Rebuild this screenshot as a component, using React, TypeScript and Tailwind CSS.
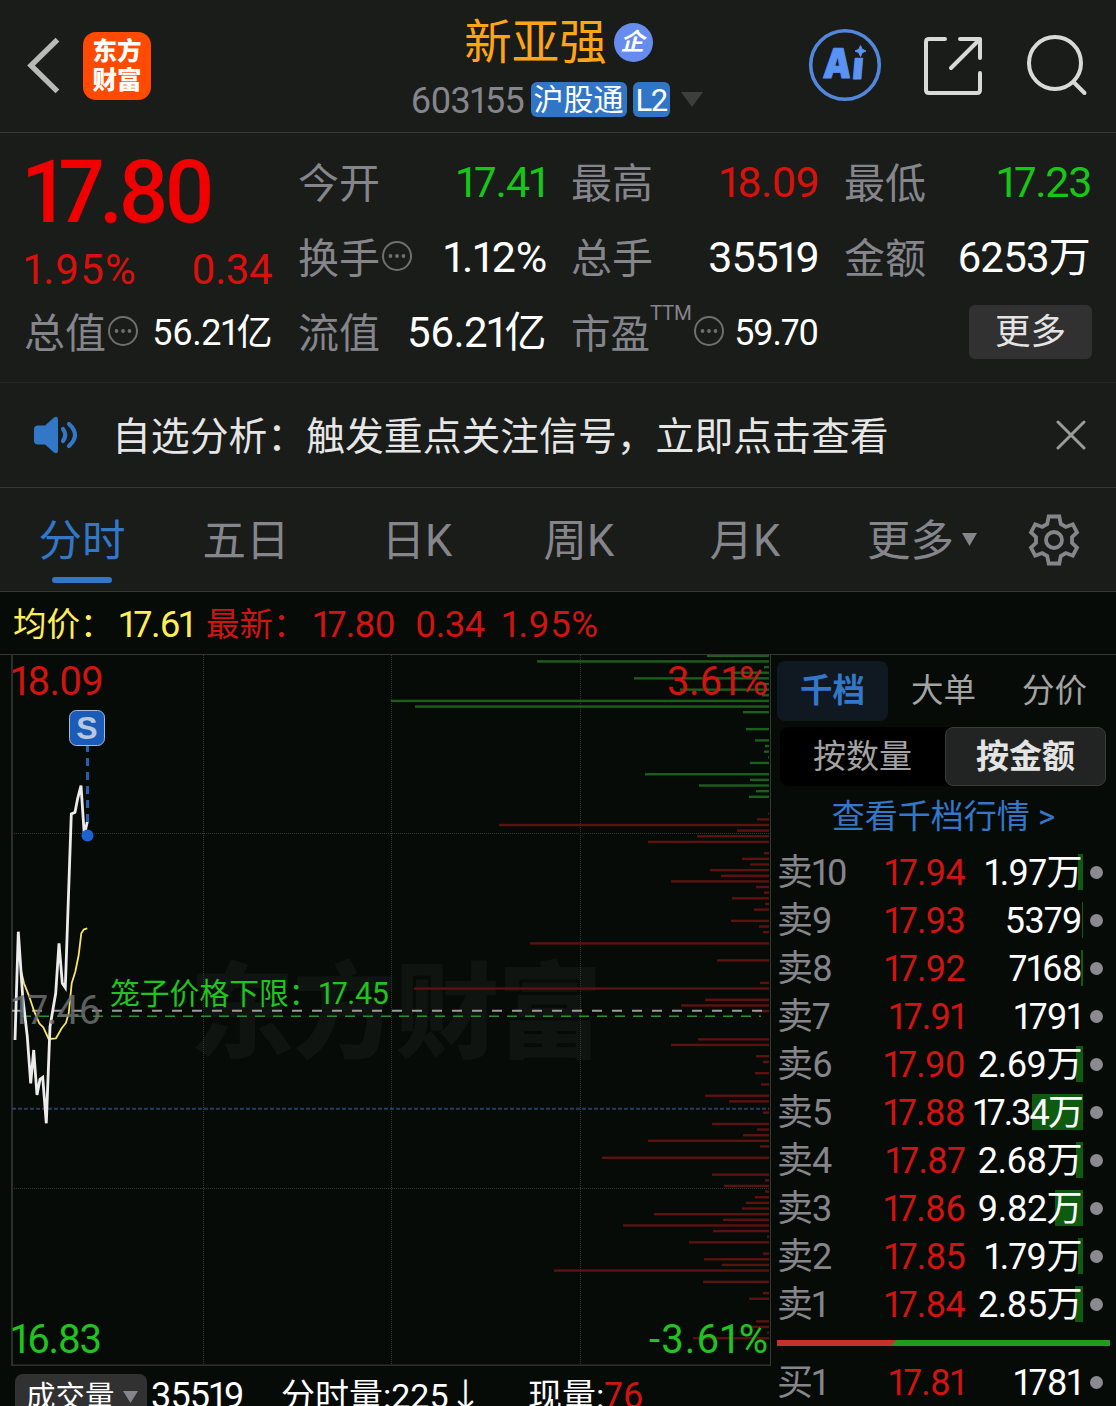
import type { ReactNode } from "react";
import clsx from "clsx";

// [price slot, bar length]; slots run from the top of the chart downwards
const sellDepth = [
  [0, 62], [1, 232], [2, 5], [3, 36], [4, 135], [5, 12], [6, 89], [7, 7], [8, 378], [9, 354],
  [10, 26], [13, 23], [15, 14], [16, 4], [17, 5], [18, 1], [19, 19], [21, 124], [22, 19],
  [23, 70], [24, 13], [25, 20],
];

const buyDepth = [
  [28, 1], [29, 12], [30, 270], [31, 32], [32, 72], [33, 121], [35, 5], [36, 27], [37, 19],
  [38, 59], [39, 48], [40, 98], [41, 13], [42, 5], [43, 37], [44, 4], [45, 15], [47, 38],
  [48, 10], [49, 6], [51, 239], [54, 52], [58, 9], [59, 355], [61, 64], [62, 88], [63, 14],
  [68, 71], [69, 98], [71, 13], [72, 6], [74, 14], [76, 8], [78, 64], [79, 40], [81, 6],
  [83, 57], [84, 12], [85, 26], [86, 121], [87, 9], [89, 167], [92, 57], [93, 4], [94, 45],
  [95, 4], [96, 14], [97, 23], [98, 27], [99, 115], [100, 46], [101, 146], [102, 56],
  [103, 2], [104, 80], [106, 6], [107, 65], [108, 47], [109, 215], [111, 66], [113, 6],
  [114, 20], [118, 13], [119, 22], [120, 2], [121, 76],
];

const priceLine =
  "15,385 18.3,276.7 22.7,341.7 27.3,381.7 30.7,428.3 33.7,395 37,440 40,424.3 42.7,422.3 46.3,468.3 50,371.7 55.7,338.3 59,288.3 62.3,328.3 65.3,332.7 71.3,159 75,157.3 77.7,143.3 81,130.7 84.3,180 87.3,166.7";
const averageLine =
  "21.3,316.7 24,328.3 29.3,341.7 34.3,356.7 39.3,368.3 43.3,372.3 48.7,384 56,383.3 61.7,373.3 66,367.7 68.7,358.3 71.7,328.3 75.3,316.7 78.7,300 81.3,278.3 84,274.3 87.3,273.3";

const asks = [
  { label: "卖10", price: "17.94", amount: "1.97万", bar: 5 },
  { label: "卖9", price: "17.93", amount: "5379", bar: 1 },
  { label: "卖8", price: "17.92", amount: "7168", bar: 2 },
  { label: "卖7", price: "17.91", amount: "1791", bar: 0 },
  { label: "卖6", price: "17.90", amount: "2.69万", bar: 7 },
  { label: "卖5", price: "17.88", amount: "17.34万", bar: 51 },
  { label: "卖4", price: "17.87", amount: "2.68万", bar: 7 },
  { label: "卖3", price: "17.86", amount: "9.82万", bar: 28 },
  { label: "卖2", price: "17.85", amount: "1.79万", bar: 5 },
  { label: "卖1", price: "17.84", amount: "2.85万", bar: 8 },
];

function InfoDots() {
  return (
    <svg viewBox="0 0 32 32" className="mb-0.5 ml-px size-8 shrink-0 text-[#6f6f6f]">
      <circle cx="16" cy="16" r="14" fill="none" stroke="currentColor" strokeWidth="2" />
      <circle cx="9.5" cy="16" r="1.9" fill="currentColor" />
      <circle cx="16" cy="16" r="1.9" fill="currentColor" />
      <circle cx="22.5" cy="16" r="1.9" fill="currentColor" />
    </svg>
  );
}

function Stat({
  label,
  info,
  value,
  className,
}: {
  label: ReactNode;
  info?: boolean;
  value: string;
  className: string;
}) {
  return (
    <div className="flex h-[75px] items-center justify-between whitespace-nowrap">
      <div className="flex items-center text-[41px] text-[#85858b]">
        <span className="pt-[5px]">{label}</span>
        {info && <InfoDots />}
      </div>
      <span className={clsx("pt-0.5", className)}>{value}</span>
    </div>
  );
}

function Header() {
  return (
    <header className="flex h-[133px] border-b border-[#343734]">
      <div className="flex flex-1 pt-8 pl-[26px]">
        <svg viewBox="0 0 34 58" className="mt-1 h-[58px] w-[34px]">
          <path d="M29.500 5.500 5 29.500l24.500 24" fill="none" stroke="#b9b9b9" strokeWidth="5.400" strokeLinecap="square" />
        </svg>
        <div className="ml-[23px] flex size-[68px] flex-col items-center justify-center rounded-[13px] bg-[#ff4a00] pb-px text-[24.5px] leading-[29px] font-black text-white">
          <span>东方</span>
          <span>财富</span>
        </div>
      </div>
      <div className="flex flex-col items-center">
        <div className="mt-[14px] flex h-14 items-center gap-[7px] pl-[3px]">
          <h1 className="pt-[3px] text-[47.5px] text-[#fda516]">新亚强</h1>
          <span className="flex size-[39px] items-center justify-center rounded-full bg-[#668ced] pr-0.5 text-[24px] font-bold text-white italic">
            企
          </span>
        </div>
        <div className="mt-2 flex h-[42px] items-center pr-px">
          <span className="w-[120px] pt-[3px] text-[36px] tracking-[-0.7px] text-[#85858b]">603155</span>
          <span className="flex h-[35px] w-24 items-center justify-center rounded-md bg-[#3176c6] pt-0.5 text-[30px] text-white">
            沪股通
          </span>
          <span className="ml-1.5 flex h-[35px] w-[37px] items-center justify-center rounded-md bg-[#3176c6] pt-0.5 text-[31px] tracking-[-1.5px] text-white">
            L2
          </span>
          <svg viewBox="0 0 22 15" className="ml-[11px] h-[15px] w-[22px]">
            <path d="M0 0h22L11 15z" fill="#3e3e3e" />
          </svg>
        </div>
      </div>
      <div className="flex flex-1 justify-end pt-7 pr-[28px]">
        <svg viewBox="0 0 74 74" className="size-[74px]">
          <circle cx="37" cy="37" r="34.3" fill="none" stroke="#5387dd" strokeWidth="3.6" />
          <g fill="#5a92f5" stroke="#5a92f5" strokeLinejoin="round" fontFamily="Inter" fontWeight="900" fontSize="41">
            <text x="16" y="50" strokeWidth="1" textLength="28" lengthAdjust="spacingAndGlyphs" transform="skewX(-4) translate(2 0)">A</text>
            <text x="44" y="51.500" strokeWidth="1" fontSize="38" transform="skewX(-5) translate(4 0)">ı</text>
            <path d="M52.500 17.500l1.700 3.800 3.800 1.700-3.800 1.700-1.700 3.800-1.700-3.800-3.800-1.700 3.800-1.700z" />
          </g>
        </svg>
        <svg viewBox="0 0 60 60" className="mt-2 ml-[41px] size-[60px]" fill="none" stroke="#d9d9d9" strokeWidth="4" strokeLinecap="round" strokeLinejoin="round">
          <path d="M22 3H6Q3 3 3 6v48q0 3 3 3h48q3 0 3-3V37M37 3h20v19M57 3 28 32" />
        </svg>
        <svg viewBox="0 0 62 62" className="mt-1.5 ml-[43px] size-[62px]" fill="none" stroke="#d9d9d9" strokeWidth="4" strokeLinecap="round">
          <circle cx="29" cy="29" r="26" />
          <path d="m47.500 48 11 11" />
        </svg>
      </div>
    </header>
  );
}

function Quote() {
  return (
    <section className="flex h-[250px] border-b border-[#262926] pt-[11px] pl-6">
      <div className="w-[248px]">
        <div className="flex h-24 items-center text-[87px] font-medium tracking-[-5.2px] text-[#f00000]">17.80</div>
        <div className="flex h-[54px] items-center justify-between pt-1.5 text-[42px] text-[#d7110d]">
          <span className="tracking-[1px]">1.95%</span>
          <span className="tracking-[-0.5px]">0.34</span>
        </div>
        <Stat label="总值" info value="56.21亿" className="text-[36px] tracking-[-0.4px] text-white" />
      </div>
      <div className="ml-[26px] w-[249px]">
        <Stat label="今开" value="17.41" className="text-[43px] tracking-[-0.9px] text-[#17c717]" />
        <Stat label="换手" info value="1.12%" className="text-[43px] tracking-[-0.2px] text-white" />
        <Stat label="流值" value="56.21亿" className="pr-px text-[42px] tracking-[-0.6px] text-white" />
      </div>
      <div className="ml-6 w-[248px]">
        <Stat label="最高" value="18.09" className="text-[43px] tracking-[-1px] text-[#d7110d]" />
        <Stat label="总手" value="35519" className="text-[43px] tracking-[-1px] text-white" />
        <Stat
          label={
            <>
              <span className="text-[39.500px]">市盈</span>
              <sup className="-top-[28px] text-[20.500px] leading-none tracking-[-0.3px]">TTM</sup>
            </>
          }
          info
          value="59.70"
          className="pr-px text-[36px] tracking-[-1.2px] text-white"
        />
      </div>
      <div className="ml-[25px] w-[248px]">
        <Stat label="最低" value="17.23" className="pr-px text-[43px] tracking-[-1.3px] text-[#17c717]" />
        <Stat label="金额" value="6253万" className="pr-0.5 text-[42px] tracking-[-0.8px] text-white" />
        <div className="flex h-[75px] items-center justify-end">
          <button className="h-[54px] w-[123px] rounded-md bg-[#313131] pt-[3px] text-[35.500px] leading-none text-[#e4e4e4]">更多</button>
        </div>
      </div>
    </section>
  );
}

function Notice() {
  return (
    <section className="flex h-[105px] items-center border-b border-[#343734] pr-[30px] pl-[33px]">
      <svg viewBox="0 0 46 38" className="h-[38px] w-[46px]">
        <path d="M1 13.500q0-4 4-4h7L21 1.500q4-2 4 2v31q0 4-4 2l-9-8H5q-4 0-4-4z" fill="#3277c8" />
        <path d="M30 13q4.500 6 0 12M36 8q12 11 0 22" fill="none" stroke="#3277c8" strokeWidth="4.200" strokeLinecap="round" />
      </svg>
      <p className="ml-[33px] pt-1 text-[38.850px] whitespace-nowrap text-[#e6e6e6]">自选分析：触发重点关注信号，立即点击查看</p>
      <svg viewBox="0 0 30 30" className="ml-auto size-[30px]">
        <path d="m2 2 26 26M28 2 2 28" stroke="#9b9b9b" strokeWidth="3" strokeLinecap="round" />
      </svg>
    </section>
  );
}

function PeriodTabs() {
  return (
    <nav className="grid h-[104px] grid-cols-[164px_164px_178px_146px_186px_168px_96px] items-center justify-items-center border-b border-[#343734] text-[43.500px] whitespace-nowrap text-[#85858b]">
      <span className="relative pt-1 text-[#3277c8]">
        分时
        <i className="absolute -bottom-[20px] left-[13px] h-1.5 w-[60px] rounded-full bg-[#3277c8]" />
      </span>
      <span className="pt-1">五日</span>
      <span className="pt-1">日K</span>
      <span className="pt-1">周K</span>
      <span className="pt-1">月K</span>
      <span className="flex items-center gap-2">
        <span className="pt-1">更多</span>
        <svg viewBox="0 0 15 13" className="h-[13px] w-[15px]">
          <path d="M0 0h15L7.500 13z" fill="currentColor" />
        </svg>
      </span>
      <svg viewBox="0 0 52 52" className="size-[52px]" fill="none" stroke="currentColor" strokeWidth="3.800">
        <path d="M20.700 2.500h10.600l1.500 7.500 5 3 7-2.700 4.200 8-5 4.700v6l5 4.700-4.200 8-7-2.700-5 3-1.500 7.500H20.700L19.200 42l-5-3-7 2.700-4.200-8L8 29v-6l-5-4.700 4.200-8 7 2.700 5-3z" />
        <circle cx="26" cy="26" r="8" />
      </svg>
    </nav>
  );
}

function PriceBar() {
  return (
    <div className="flex h-[63px] items-center border-b border-[#343734] pt-1 pl-[13px] text-[36.500px] whitespace-nowrap text-[#d01410]">
      <span className="flex w-[193px] items-center text-[#ffee58]">
        <span className="w-[106px] text-[33.500px]">均价：</span>
        <span className="tracking-[-1.300px]">17.61</span>
      </span>
      <span className="w-[107px] text-[33.500px]">最新：</span>
      <span className="w-[102px] tracking-[-1px]">17.80</span>
      <span className="w-[87px] tracking-[-0.5px]">0.34</span>
      <span className="tracking-[0.6px]">1.95%</span>
    </div>
  );
}

function DepthBars({ rows, color }: { rows: number[][]; color: string }) {
  return (
    <g fill={color}>
      {rows.map(([slot, length]) => (
        <rect key={slot} x={769 - length} y={slot * 5.64 - 0.4} width={length} height="2.4" />
      ))}
    </g>
  );
}

function Chart() {
  return (
    <svg viewBox="0 0 771 711" className="block h-[711px] w-[771px]" fontFamily="Roboto, 'Noto Sans CJK SC', sans-serif">
      <text x="190" y="395" fontSize="104" fontWeight="900" fill="#101411" textLength="412">
        东方财富
      </text>
      <g stroke="#343734" strokeWidth="1" strokeDasharray="1 1">
        <path d="M203.500 0v710M391.500 0v710M580.500 0v710M12 178.500h758M12 533.500h758" />
      </g>
      <path d="M12 0v710.500h758" fill="none" stroke="#2c2f2c" strokeWidth="2" />
      <path d="M770.500 0v711" stroke="#343734" />
      <DepthBars rows={sellDepth} color="#1b5f1d" />
      <DepthBars rows={buyDepth} color="#5c1210" />

      <path d="M12 355.700h750" stroke="#9a9a9a" strokeWidth="2" strokeDasharray="10 10" />
      <path d="M21 361.300h740" stroke="#2c8f2c" strokeWidth="1.400" strokeDasharray="10 8" />
      <path d="M12 453.700h757" stroke="#2b3c5e" strokeWidth="2" strokeDasharray="4 2" />

      <polyline points={averageLine} fill="none" stroke="#f7e468" strokeWidth="1.800" strokeLinejoin="round" />
      <polyline points={priceLine} fill="none" stroke="#ececec" strokeWidth="2.800" />

      <path d="M87.500 91v78" stroke="#2461b4" strokeWidth="3" strokeDasharray="8 6" strokeDashoffset="2" />
      <circle cx="87.500" cy="180.500" r="6" fill="#1b63d0" />
      <rect x="69.500" y="55.500" width="35" height="35" rx="7" fill="#1b5cb8" stroke="#a9bbd6" />
      <text x="87" y="84" textAnchor="middle" fontSize="32" fontWeight="700" fontFamily="Liberation Sans" fill="#b9c8de">
        S
      </text>

      <g fontSize="40">
        <text x="11" y="40" textLength="93" fill="#d01410">18.09</text>
        <text x="11" y="369" textLength="90" fill="#6e6e6e" fillOpacity=".85">17.46</text>
        <text x="11" y="698" textLength="91" fill="#1fc41f">16.83</text>
        <text x="667" y="40" textLength="101" fill="#d01410">3.61%</text>
        <text x="649" y="698" textLength="119" fill="#1fc41f">-3.61%</text>
      </g>
      <g fontSize="30.500" fill="#1fc41f">
        <text x="110" y="349" fontSize="29.800">笼子价格下限：</text>
        <text x="319" y="349" textLength="70">17.45</text>
      </g>
    </svg>
  );
}

function VolumeBar() {
  return (
    <div className="flex h-10 text-[34px] leading-[60px] whitespace-nowrap text-white">
      <button className="mt-2 ml-[15px] flex h-12 w-[132px] items-start rounded-lg bg-[#313131] pl-[11px] text-[29.500px] leading-[46px]">
        成交量
        <svg viewBox="0 0 15 12" className="mt-[17px] ml-2 h-3 w-[15px]">
          <path d="M0 0h15L7.500 12z" fill="#85858b" />
        </svg>
      </button>
      <span className="ml-1 w-[130px] text-[36px] tracking-[-0.8px]">35519</span>
      <span className="w-[247px]">分时量:225↓</span>
      <span>
        现量:<span className="text-[36px] text-[#d01410]">76</span>
      </span>
    </div>
  );
}

function OrderRow({ label, price, amount, bar }: (typeof asks)[number]) {
  // six-glyph amounts are set tighter so that they stay clear of the price
  const wide = amount.length > 5;
  return (
    <li className="relative flex h-12 items-center text-[36px] leading-none whitespace-nowrap">
      <i className="absolute right-[33px] h-9 bg-[#0d5a10]" style={{ width: bar }} />
      <span className="relative w-[90px] pt-px tracking-[-1px] text-[#85858b]">{label}</span>
      <span className="relative w-[98px] pt-px text-right tracking-[-0.8px] text-[#d01410]">{price}</span>
      <span className={clsx("relative w-[117px] pt-px text-right text-white", wide ? "tracking-[-1.9px]" : "tracking-[-0.6px]")}>
        {amount}
      </span>
      <i className="ml-2 size-[13px] rounded-full bg-[#8a8a90]" />
    </li>
  );
}

function OrderBook() {
  return (
    <aside className="w-[345px]">
      <div className="mt-1.5 ml-1.5 grid h-[60px] w-[333px] grid-cols-3 text-[32.500px] leading-[60px] text-[#a3a3a3]">
        {["千档", "大单", "分价"].map((name, i) => (
          <span key={name} className={clsx("rounded-lg text-center", i === 0 && "bg-[#101821] font-bold text-[#3277c8]")}>
            {name}
          </span>
        ))}
      </div>
      <div className="mt-1.5 ml-[9px] grid h-[59px] w-[326px] grid-cols-[165px_161px] grid-rows-[59px] rounded-lg bg-black text-center text-[33px] leading-[60px] text-[#a3a3a3]">
        <span>按数量</span>
        <span className="rounded-lg border border-[#393c39] bg-[#212422] leading-[58px] font-bold text-[#e4e4e4]">按金额</span>
      </div>
      <a className="block h-[62px] text-center text-[33px] leading-[62px] text-[#3277c8]">查看千档行情 &gt;</a>
      <ul className="pl-1.5">
        {asks.map((row) => (
          <OrderRow key={row.label} {...row} />
        ))}
      </ul>
      <div className="mt-3 ml-1.5 h-1.5 w-[333px] bg-[linear-gradient(135deg,#c23330_84px,#1f9c1d_85px)]" />
      <ul className="mt-3 pl-1.5">
        <OrderRow label="买1" price="17.81" amount="1781" bar={0} />
      </ul>
    </aside>
  );
}

export default function App() {
  return (
    <main className="h-[1406px] w-[1116px] overflow-hidden bg-[#191c19] font-[Roboto,'Noto_Sans_CJK_SC',sans-serif] leading-none proportional-nums">
      <Header />
      <Quote />
      <Notice />
      <PeriodTabs />
      <div className="bg-[#070b08]">
        <PriceBar />
        <div className="flex">
          <div className="w-[771px]">
            <Chart />
            <VolumeBar />
          </div>
          <OrderBook />
        </div>
      </div>
    </main>
  );
}
